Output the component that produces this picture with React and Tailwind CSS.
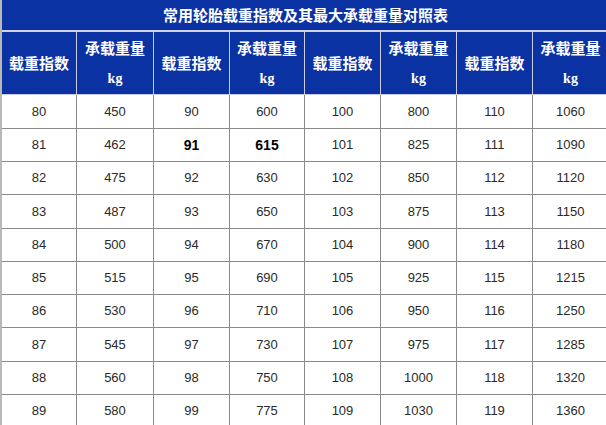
const rows = [
  [80, 450, 90, 600, 100, 800, 110, 1060],
  [81, 462, 91, 615, 101, 825, 111, 1090],
  [82, 475, 92, 630, 102, 850, 112, 1120],
  [83, 487, 93, 650, 103, 875, 113, 1150],
  [84, 500, 94, 670, 104, 900, 114, 1180],
  [85, 515, 95, 690, 105, 925, 115, 1215],
  [86, 530, 96, 710, 106, 950, 116, 1250],
  [87, 545, 97, 730, 107, 975, 117, 1285],
  [88, 560, 98, 750, 108, 1000, 118, 1320],
  [89, 580, 99, 775, 109, 1030, 119, 1360],
]

// some rows are a pixel taller so the lines land where the original has them
const tall = [0, 3, 7]

function HeadIndex() {
  return (
    <th className="bg-[#0b32a3] border-r border-b border-[#c9cde0] text-white text-[15px] font-bold align-middle p-0">
      载重指数
    </th>
  )
}

function HeadLoad() {
  return (
    <th className="bg-[#0b32a3] border-r border-b border-[#c9cde0] text-white text-[15px] font-bold align-middle leading-[31px] p-0">
      <div>承载重量</div>
      <div className="font-['Liberation_Serif',serif] text-[14px]">kg</div>
    </th>
  )
}

export default function App() {
  return (
    <div className="w-[606px] h-[425px] overflow-hidden bg-white font-['Noto_Sans_CJK_SC',sans-serif]">
      <table className="table-fixed w-[609px] border-separate border-spacing-0 border-l-2 border-[#b8b8b8]">
        <colgroup>
          <col className="w-[75px]" />
          <col className="w-[77px]" />
          <col className="w-[76px]" />
          <col className="w-[75px]" />
          <col className="w-[76px]" />
          <col className="w-[76px]" />
          <col className="w-[76px]" />
          <col className="w-[76px]" />
        </colgroup>
        <thead>
          <tr className="h-[32px]">
            <th colSpan={8} className="bg-[#0b32a3] border-b-2 border-[#cfd3e3] text-white text-[15px] font-bold text-center align-middle p-0 leading-[30px]">
              常用轮胎载重指数及其最大承载重量对照表
            </th>
          </tr>
          <tr className="h-[63px]">
            <HeadIndex />
            <HeadLoad />
            <HeadIndex />
            <HeadLoad />
            <HeadIndex />
            <HeadLoad />
            <HeadIndex />
            <HeadLoad />
          </tr>
        </thead>
        <tbody className="font-['Liberation_Sans',sans-serif] text-[13px] text-[#2a2a2a]">
          {rows.map((r, i) => (
            <tr key={i} className={tall.includes(i) ? 'h-[34px]' : 'h-[33px]'}>
              {r.map((v, j) => (
                <td
                  key={j}
                  className={
                    'border-r border-b border-[#8a8a8a] text-center align-middle p-0 leading-[20px] ' +
                    (i === 1 && (j === 2 || j === 3) ? 'font-bold text-[14px] text-black' : '')
                  }
                >
                  {v}
                </td>
              ))}
            </tr>
          ))}
        </tbody>
      </table>
    </div>
  )
}
